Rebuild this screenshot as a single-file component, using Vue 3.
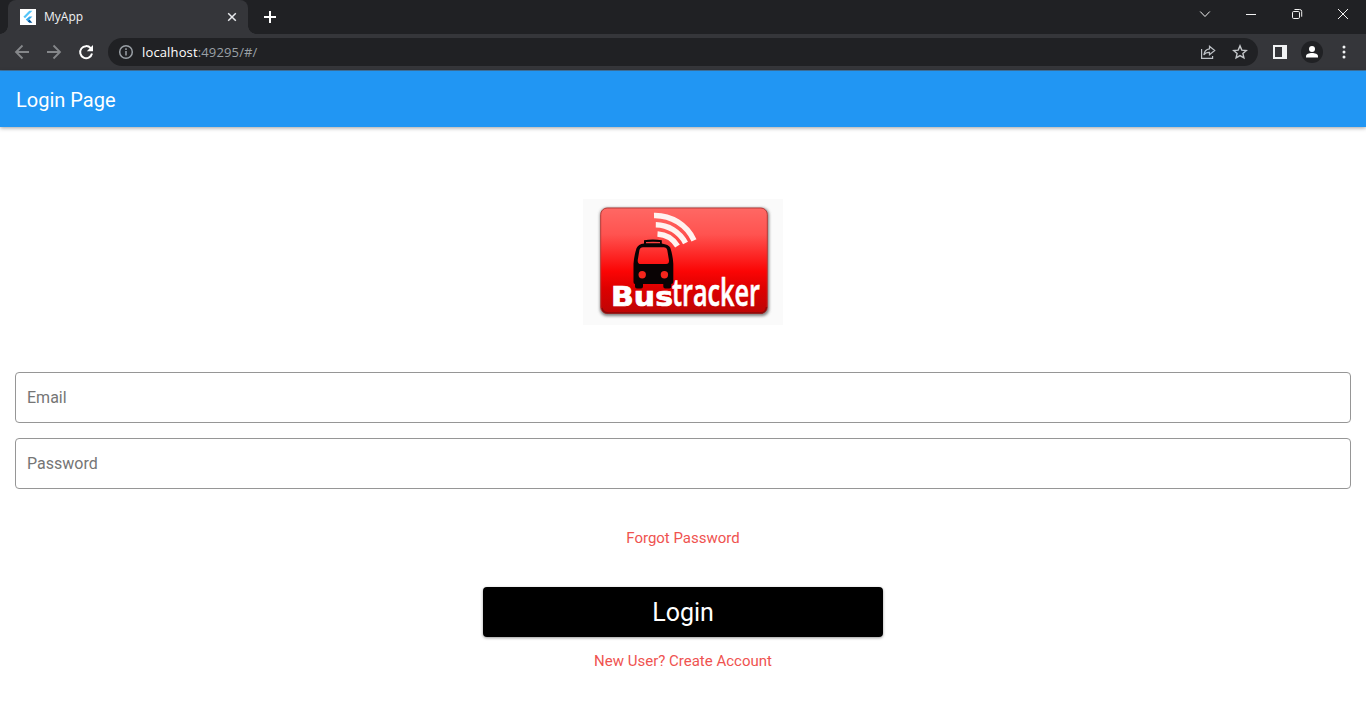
<script setup>
import { ref } from 'vue'

const email = ref('')
const password = ref('')
</script>

<template>
  <div class="window">
    <header class="tabs">
      <div class="tab">
        <svg class="favicon" width="16" height="16" viewBox="0 0 16 16">
          <path d="M0 0h16v16H0z" fill="#fff" />
          <path d="M9.3 1.8h3.1L5 9.2 3.4 7.7z" fill="#54c5f8" />
          <path d="M9.3 7.4h3.1L9.4 10.4 7.6 12.2 5.8 10.5z" fill="#35a9ec" />
          <path d="M7.6 12.200 9.400 10.500l3 3.200H9.300z" fill="#01579b" />
        </svg>
        <span class="tab-title">MyApp</span>
        <svg class="tab-close" width="16" height="16" viewBox="0 0 16 16"><path d="m4.2 4.2 7.6 7.6m0-7.6-7.6 7.6" stroke="#e8eaed" stroke-width="1.5" /></svg>
      </div>
      <svg class="new-tab" width="16" height="16" viewBox="0 0 16 16"><path d="M8 2v12M2 8h12" stroke="#fff" stroke-width="2" /></svg>
      <div class="controls">
        <svg width="46" height="28" viewBox="0 0 46 28"><path d="m18.2 11.5 4.8 5 4.8-5" /></svg>
        <svg width="46" height="28" viewBox="0 0 46 28"><path d="M18 14.5h10" /></svg>
        <svg width="46" height="28" viewBox="0 0 46 28"><rect x="18.5" y="11.5" width="7" height="7" rx="1.2" /><path d="M20.5 9.5h5.2a2 2 0 0 1 2 2v5.2" /></svg>
        <svg width="46" height="28" viewBox="0 0 46 28"><path d="m18 9 10 10m0-10L18 19" /></svg>
      </div>
    </header>

    <nav class="toolbar">
      <svg class="dim" width="16" height="16" viewBox="0 0 16 16"><path d="M15 8H2m6.5-6.5L2 8l6.5 6.5" /></svg>
      <svg class="dim" width="16" height="16" viewBox="0 0 16 16"><path d="M1 8h13M7.5 1.5 14 8l-6.5 6.5" /></svg>
      <svg class="reload" width="16" height="16" viewBox="0 0 16 16"><path d="M12.7 4.2A6 6 0 1 0 14 9.5" /><path class="solid" d="M15 1v6.2H8.8z" /></svg>
      <div class="address">
        <svg width="16" height="16" viewBox="0 0 16 16"><circle cx="8" cy="8" r="6.3" /><path d="M8 7v4.5M8 4.300v1.600" /></svg>
        <span class="url"><b>localhost</b>:49295/#/</span>
        <svg class="share" width="16" height="16" viewBox="0 0 16 16"><path d="M1.600 5v9.400h11V12M9.500 2.300l5.200 4.200-5.200 4.200V8.400C6.700 8.300 5 9.200 3.800 11c.4-3.500 2.300-5.700 5.700-6.200z" /></svg>
        <svg class="star" width="16" height="16" viewBox="0 0 16 16"><path d="m8 1.900 1.800 4.200 4.500.4-3.400 3 1 4.400L8 11.600l-3.900 2.300 1-4.400-3.400-3 4.500-.4z" /></svg>
      </div>
      <svg class="panel" width="14" height="14" viewBox="0 0 14 14"><path d="M0 0h14v14H0zM2 2v10h7V2z" fill-rule="evenodd" /></svg>
      <svg class="avatar" width="22" height="22" viewBox="0 0 22 22"><circle cx="11" cy="11" r="11" fill="#202124" /><circle cx="11" cy="8" r="3" fill="#fff" /><path d="M5 16.500v-1.200c0-2.200 3-3.300 6-3.300s6 1.100 6 3.300v1.200z" fill="#fff" /></svg>
      <svg class="more" width="4" height="14" viewBox="0 0 4 14"><circle cx="2" cy="2" r="1.500" /><circle cx="2" cy="7" r="1.500" /><circle cx="2" cy="12" r="1.500" /></svg>
    </nav>

    <div class="appbar"><h1>Login Page</h1></div>

    <main>
      <svg class="logo" width="200" height="126" viewBox="0 0 200 126">
        <defs>
          <linearGradient id="red" x1="0" y1="0" x2="0" y2="1">
            <stop offset="0" stop-color="#ff6864" />
            <stop offset=".25" stop-color="#ff5350" />
            <stop offset=".6" stop-color="#fb0505" />
            <stop offset=".76" stop-color="#de0000" />
            <stop offset="1" stop-color="#bd0505" />
          </linearGradient>
          <filter id="soft" x="-10%" y="-10%" width="120%" height="125%"><feGaussianBlur stdDeviation="1.5" /></filter>
        </defs>
        <path d="M0 0h200v126H0z" fill="#fafafa" />
        <rect x="17" y="9" width="169" height="108" rx="7" fill="#555" opacity=".75" filter="url(#soft)" />
        <rect x="17.7" y="9" width="166.6" height="105.5" rx="6.5" fill="url(#red)" stroke="#b83a38" />
        <path d="M19 109q1 5 6 5h152q6 0 6.500-6" fill="none" stroke="#750b0b" stroke-width="1.500" opacity=".7" />
        <g fill="none" stroke="#fff3f0" stroke-width="5.500">
          <path d="M71 16.500A43 43 0 0 1 111 41.300" />
          <path d="M72.800 25.700A34 34 0 0 1 102.500 44" />
          <path d="M74.500 34.900A25 25 0 0 1 94.500 47" />
        </g>
        <path fill="#090304" fill-rule="evenodd" d="M61 41.200q8.800-1.600 17.800 0v3.200q6.700 1 8.500 4.400 2.600 8 3 16V83q0 2-2 2v2.500q0 2-2 2h-4q-2 0-2-2V85H60v2.500q0 2-2 2h-4q-2 0-2-2V85q-1.500 0-1.500-2V64.800q.6-8 3-15.600 1.800-4 7.500-4.800zM63 43v1.200h14V43q-7-.7-14 0zM60 48.200q-3 .2-3.600 3l-1.600 9.600q-.6 4.200 3 4.200h25.400q3.300 0 2.700-4.200l-1.600-9.600q-.6-3-3.700-3z" />
        <g fill="#f5251c"><circle cx="59.200" cy="75.700" r="3.700" /><circle cx="81.400" cy="75.700" r="3.700" /></g>
        <text class="bus" x="28" y="107.300" textLength="62" lengthAdjust="spacingAndGlyphs">Bus</text>
        <text class="tracker" x="89" y="107.300" textLength="88" lengthAdjust="spacingAndGlyphs">tracker</text>
      </svg>

      <form @submit.prevent>
        <input v-model="email" type="email" placeholder="Email" />
        <input v-model="password" type="password" placeholder="Password" />
        <a class="forgot">Forgot Password</a>
        <button type="submit">Login</button>
        <a class="create">New User? Create Account</a>
      </form>
    </main>
  </div>
</template>

<style>
body { margin: 0; overflow: hidden; background: #fff; }
</style>

<style scoped>
* { box-sizing: border-box; }
svg { display: block; flex: none; overflow: visible; }
.window { height: 720px; font-family: Roboto, sans-serif; background: #fff; }
.tabs { display: flex; height: 34px; padding-left: 8px; background: #202124; }
.tab { position: relative; display: flex; align-items: center; width: 240px; height: 34px; padding: 0 8px 0 12px; border-radius: 8px 8px 0 0; background: #35363a; }
.tab::before, .tab::after { content: ''; position: absolute; bottom: 0; width: 8px; height: 8px; }
.tab::before { left: -8px; background: radial-gradient(circle at 0 0, transparent 7.5px, #35363a 8px); }
.tab::after { right: -8px; background: radial-gradient(circle at 100% 0, transparent 7.5px, #35363a 8px); }
.tab-title { flex: 1; margin-left: 8px; color: #f1f3f4; font: 12px/16px 'Open Sans', sans-serif; }
.new-tab { margin: 9px 0 0 14px; }
.controls { display: flex; margin-left: auto; }
.controls svg { fill: none; stroke: #f2f2f2; stroke-width: 1; }
.toolbar { display: flex; align-items: center; height: 37px; padding: 0 20px 1px 14px; background: #35363a; border-bottom: 1px solid #4278a5; }
.dim { margin-right: 16px; fill: none; stroke: #85878a; stroke-width: 1.8; }
.reload { margin-right: 14px; fill: none; stroke: #fff; stroke-width: 2; }
.reload .solid { fill: #fff; stroke: none; }
.address { display: flex; align-items: center; width: 1150px; height: 28px; padding: 0 10px; border-radius: 14px; background: #202124; }
.address svg { fill: none; stroke: #9aa0a6; stroke-width: 1.5; }
.url { margin-left: 8px; color: #9aa0a6; font: 13px/18px 'Open Sans', sans-serif; letter-spacing: .14px; }
.url b { color: #fff; font-weight: 400; }
.share { margin-left: auto; }
.address .share { stroke: #bdc1c6; stroke-width: 1.2; }
.address .star { margin-left: 16px; stroke: #c4c7ca; stroke-width: 1.4; }
.panel { margin-left: 15px; fill: #f1f3f4; }
.avatar { margin-left: 14px; }
.more { margin-left: auto; fill: #f1f3f4; }
.appbar { position: relative; display: flex; align-items: center; height: 56px; padding: 2px 16px 0; background: #2196f3; box-shadow: 0 1px 4px rgba(0, 0, 0, .38); }
h1 { margin: 0; color: #fff; font-size: 20px; font-weight: 400; line-height: 24px; }
main { display: flex; flex-direction: column; padding: 72px 15px 0; }
.logo { align-self: center; }
.bus, .tracker { fill: #fff; stroke: #fff; }
.bus { stroke-width: .7px; font: bold 27px 'DejaVu Sans', sans-serif; }
.tracker { stroke-width: .6px; font: 600 37px 'Open Sans', sans-serif; }
form { display: flex; flex-direction: column; align-items: center; margin-top: 47px; }
input { width: 100%; height: 51px; margin: 0 0 15px; padding: 0 11px; border: 1px solid #969696; border-radius: 4px; outline: 0; background: transparent; font: 16px Roboto, sans-serif; }
input::placeholder { color: #757575; opacity: 1; }
a { color: #ef5350; font-size: 15px; line-height: 18px; }
.forgot { margin-top: 25px; }
button { width: 400px; height: 50px; margin: 40px 0 15px; padding: 2px 0 0; border: 0; border-radius: 4px; background: #000; color: #fff; font: 25px/30px Roboto, sans-serif; box-shadow: 0 1px 3px rgba(0, 0, 0, .4); }
</style>
